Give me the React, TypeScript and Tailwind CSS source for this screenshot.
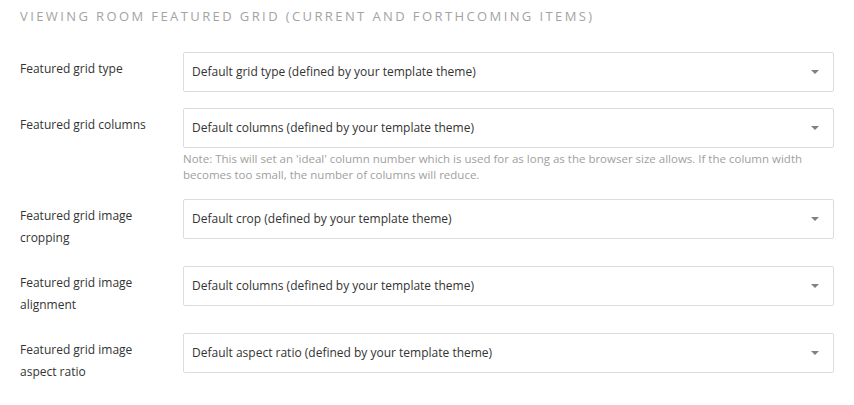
import React from 'react';

interface SelectRowProps {
  label: string;
  value: string;
  note?: string;
}

const Caret = () => (
  <svg width="8" height="4" viewBox="0 0 8 4" className="shrink-0">
    <path d="M0 0 H8 L4 4 Z" fill="#808080" />
  </svg>
);

const SelectRow: React.FC<SelectRowProps> = ({ label, value, note }) => {
  return (
    <div className="flex items-start">
      <label className="w-[150px] mr-[13px] pt-[6px] pb-[1px] text-[12px] leading-[22px] text-[#333]">
        {label}
      </label>
      <div className="flex-1">
        <div className="h-[40px] flex items-center justify-between border border-[#dcdcdc] rounded-[2px] bg-white pl-[8px] pr-[14px]">
          <span className="text-[12px] text-[#333]">{value}</span>
          <Caret />
        </div>
        {note && (
          <p className="mt-[3px] text-[11.5px] leading-[16px] text-[#a0a0a0] pr-1">{note}</p>
        )}
      </div>
    </div>
  );
};

export default function App() {
  return (
    <div
      className="w-[854px] h-[405px] bg-white px-[20px] pt-[7px]"
      style={{ fontFamily: '"Open Sans", "Liberation Sans", sans-serif' }}
    >
      <h2 className="text-[13px] tracking-[2.4px] text-[#a3a3a3] uppercase leading-[18px]">
        Viewing room featured grid (current and forthcoming items)
      </h2>
      <div className="mt-[27px] flex flex-col gap-[16px]">
        <SelectRow label="Featured grid type" value="Default grid type (defined by your template theme)" />
        <SelectRow
          label="Featured grid columns"
          value="Default columns (defined by your template theme)"
          note="Note: This will set an 'ideal' column number which is used for as long as the browser size allows. If the column width becomes too small, the number of columns will reduce."
        />
        <SelectRow label="Featured grid image cropping" value="Default crop (defined by your template theme)" />
        <SelectRow label="Featured grid image alignment" value="Default columns (defined by your template theme)" />
        <SelectRow label="Featured grid image aspect ratio" value="Default aspect ratio (defined by your template theme)" />
      </div>
    </div>
  );
}
